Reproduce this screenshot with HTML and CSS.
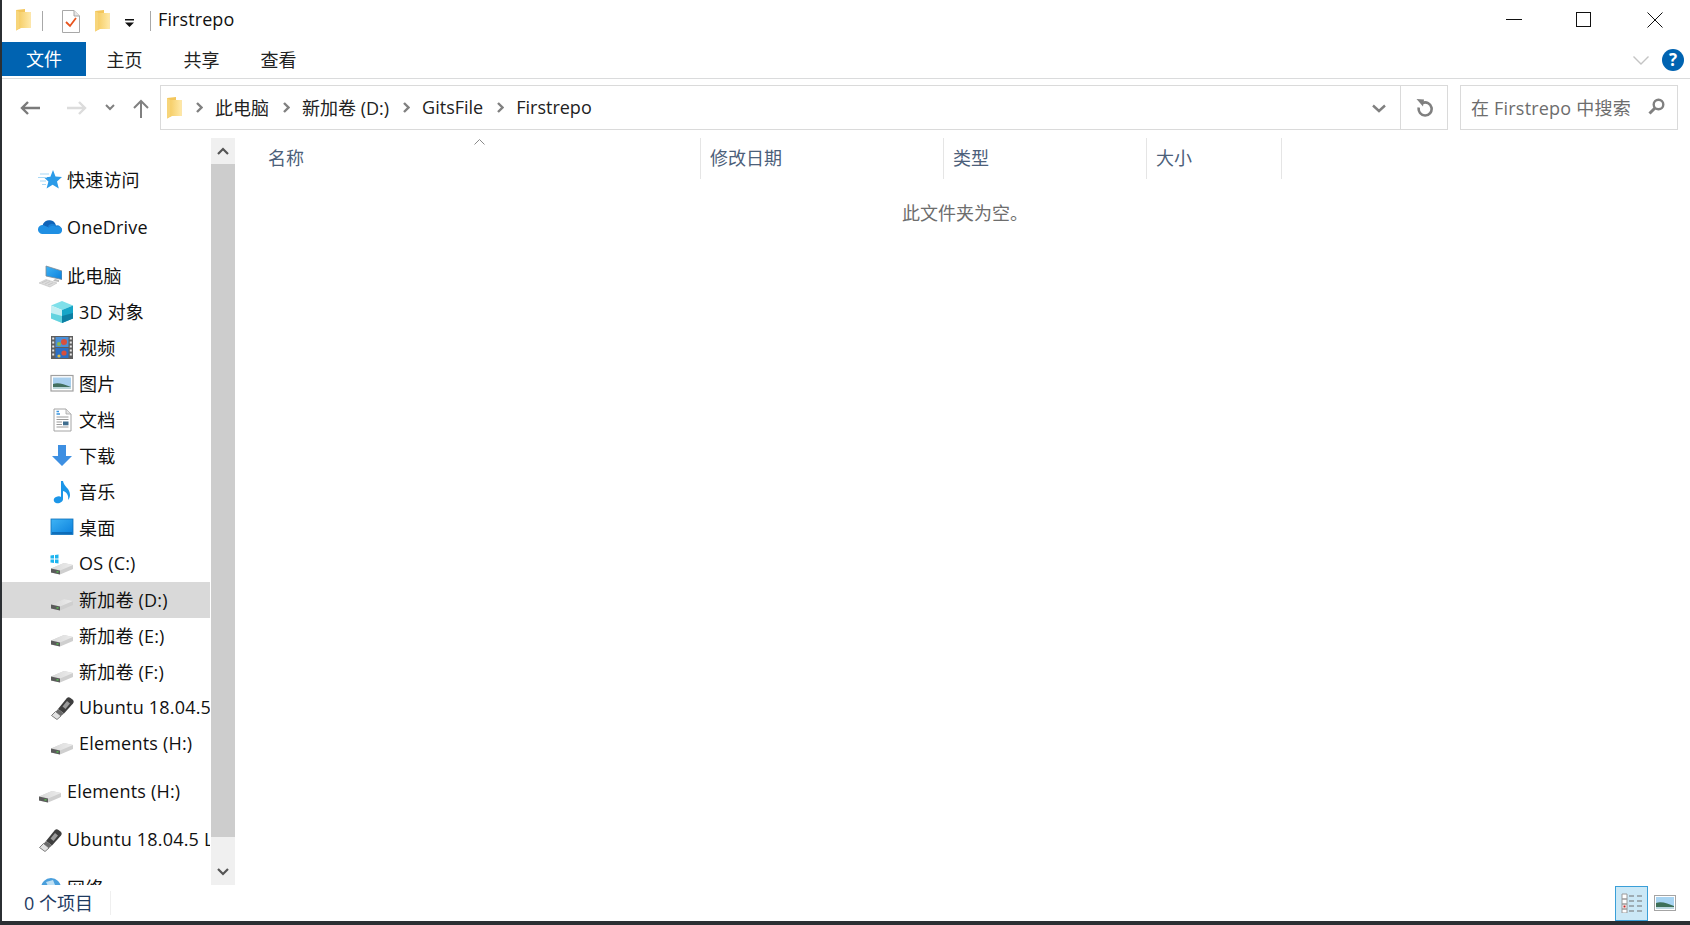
FILE: index.html
```html
<!DOCTYPE html>
<html lang="zh-CN">
<head>
  <meta charset="utf-8">
  <title>Firstrepo</title>
  <link rel="stylesheet" href="styles.css">
</head>
<body>
  <svg class="defs" aria-hidden="true">
    <defs>
      <linearGradient id="fold" x1="0" y1="0" x2="1" y2="0">
        <stop offset="0" stop-color="#f6cf6a"/><stop offset="1" stop-color="#ffe9a8"/>
      </linearGradient>
      <linearGradient id="slab" x1="0" y1="0" x2="1" y2="0">
        <stop offset="0" stop-color="#d8d8d8"/><stop offset="1" stop-color="#ececec"/>
      </linearGradient>
      <linearGradient id="screen" x1="0" y1="0" x2="1" y2="1">
        <stop offset="0" stop-color="#3fb4f5"/><stop offset="1" stop-color="#0a7fdc"/>
      </linearGradient>
      <symbol id="i-folder" viewBox="0 0 15 22">
        <path d="M0 1 L9 0 V3 H14.5 V19 H5 L0 21.5 Z" fill="#f3c65c"/>
        <path d="M3.5 3 H14.5 V19 H3.5 Z" fill="url(#fold)"/>
        <path d="M0 1 L3.5 3 V19 L0 21.5 Z" fill="#f7d57a"/>
      </symbol>
      <symbol id="i-star" viewBox="0 0 24 24">
        <path d="M15 2 L17.5 8.6 L24 9 L19 13.4 L20.8 20.5 L14.6 16.8 L8.6 20.5 L10.4 13.4 L6 9.4 L12.4 8.8 Z" fill="#2b9be8"/>
        <path d="M2 6 H11 M0 9.500 H9 M2 13 H8 M4 16.500 H8" stroke="#a8d8f6" stroke-width="1.2"/>
      </symbol>
      <symbol id="i-cloud" viewBox="0 0 24 24">
        <path d="M5 8 A7 7 0 0 1 18 9.500 L10 16 L4 13 Z" fill="#0f63b8"/>
        <path d="M10 10 A5 5 0 0 1 18 9.500 A5 5 0 0 1 24 15 L14 17 Z" fill="#1a7fd4"/>
        <path d="M5 9 A4.500 4.500 0 0 0 4 18 H20 A4 4 0 0 0 24 15 A4 4 0 0 0 18 11 A5 5 0 0 0 11 11.500 Z" fill="#1f8fe3"/>
      </symbol>
      <symbol id="i-pc" viewBox="0 0 24 24">
        <path d="M8 2 L24 7 V15.500 L8 12 Z" fill="url(#screen)" stroke="#7d8a96" stroke-width=".8"/>
        <path d="M17 15 L21 16 V18 L15 17 Z" fill="#bcbcbc"/>
        <path d="M1 19 L8 15.500 L19 19 L12 23 Z" fill="#dcdcdc" stroke="#b4b4b4" stroke-width=".5"/>
        <path d="M4 18.800 L9 16.500 M7 20 L12 17.500 M10 21 L15 18.800" stroke="#b8b8b8" stroke-width=".6"/>
      </symbol>
      <symbol id="i-cube" viewBox="0 0 24 24">
        <path d="M12 1 L23 5.500 L12 10 L1 5.500 Z" fill="#7fe0ea"/>
        <path d="M1 5.500 L12 10 V23 L1 18.500 Z" fill="#c4eff3"/>
        <path d="M12 10 L23 5.500 V18.500 L12 23 Z" fill="#16a6c8"/>
        <path d="M12 16 L23 13 V18.500 L12 23 Z" fill="#0d7fa3"/>
        <path d="M1 13 L12 16 V23 L1 18.500 Z" fill="#62d3df"/>
      </symbol>
      <symbol id="i-video" viewBox="0 0 24 24">
        <rect x="1" y="0" width="22" height="23" fill="#5e5e5e"/>
        <path d="M2.200 1.500 h2 v2 h-2z M2.200 5.500 h2 v2 h-2z M2.200 9.500 h2 v2 h-2z M2.200 13.500 h2 v2 h-2z M2.200 17.500 h2 v2 h-2z M19.800 1.500 h2 v2 h-2z M19.800 5.500 h2 v2 h-2z M19.800 9.500 h2 v2 h-2z M19.800 13.500 h2 v2 h-2z M19.800 17.500 h2 v2 h-2z" fill="#e8e8e8"/>
        <rect x="5.500" y="1" width="13" height="10" fill="#4a90d8"/>
        <rect x="5.500" y="12" width="13" height="10" fill="#2c6fc4"/>
        <circle cx="14" cy="6" r="3" fill="#d8503c"/><circle cx="9" cy="8" r="2" fill="#8cb84a"/>
        <circle cx="14" cy="17" r="2.600" fill="#d8503c"/><circle cx="9" cy="20" r="1.600" fill="#e0c04a"/>
      </symbol>
      <symbol id="i-pic" viewBox="0 0 24 24">
        <rect x="1" y="3.500" width="22" height="15.500" fill="#fff" stroke="#a0a0a0" stroke-width="1.2"/>
        <rect x="3" y="5.500" width="18" height="11.500" fill="#a8cfee"/>
        <path d="M3 12 C8 10 13 12 21 15 V17 H3 Z" fill="#43705f"/>
        <path d="M3 15 H21 V17 H3 Z" fill="#b9d5d8"/>
      </symbol>
      <symbol id="i-doc" viewBox="0 0 24 24">
        <path d="M4 1 H16 L21 6 V23 H4 Z" fill="#fff" stroke="#a4a4a4" stroke-width="1"/>
        <path d="M16 1 V6 H21" fill="#e4e4e4" stroke="#a4a4a4" stroke-width=".8"/>
        <path d="M6.500 9 H18.500 M6.500 11.500 H18.500 M6.500 14 H12 M6.500 16.500 H12 M6.500 19 H18.500" stroke="#9a9a9a" stroke-width="1"/>
        <rect x="13" y="13.500" width="5.500" height="3.800" fill="#3f6d8e"/>
        <path d="M6.500 6 H10 M6.500 3.500 H9" stroke="#3a94dd" stroke-width="1.400"/>
      </symbol>
      <symbol id="i-down" viewBox="0 0 24 24">
        <path d="M8 1 H16 V12 H22 L12 22 L2 12 H8 Z" fill="#3d8fe2"/>
      </symbol>
      <symbol id="i-music" viewBox="0 0 24 24">
        <path d="M11 1 H13 C14 7 20 8 20 15 C20 17 19 19 18 20 C19 16 17 12 13 11 V19 C13 22 9 24 6 23 C3 22 3 18 6 17 C8 16 10 16 11 17 Z" fill="#1c96e8"/>
      </symbol>
      <symbol id="i-desk" viewBox="0 0 24 24">
        <rect x="1" y="3" width="22" height="15.500" fill="url(#screen)" stroke="#0e6fb8" stroke-width=".8"/>
        <path d="M2 17 H22" stroke="#0a5fa8" stroke-width="1.400"/>
      </symbol>
      <symbol id="i-drive" viewBox="0 0 24 24">
        <path d="M1 16.500 L14 11 L23 13 V17 L10 22.500 L1 20.500 Z" fill="#cfcfcf"/>
        <path d="M1 16.500 L14 11 L23 13 L10 18.500 Z" fill="url(#slab)"/>
        <path d="M1 16.500 L10 18.500 V22.500 L1 20.500 Z" fill="#5a5a5a"/>
        <rect x="6.500" y="19.200" width="2" height="1.400" fill="#57c050"/>
      </symbol>
      <symbol id="i-win" viewBox="0 0 24 24">
        <path d="M1 16.500 L14 11 L23 13 V17 L10 22.500 L1 20.500 Z" fill="#cfcfcf"/>
        <path d="M1 16.500 L14 11 L23 13 L10 18.500 Z" fill="url(#slab)"/>
        <path d="M1 16.500 L10 18.500 V22.500 L1 20.500 Z" fill="#5a5a5a"/>
        <rect x="6.500" y="19.200" width="2" height="1.400" fill="#57c050"/>
        <path d="M0.500 3.500 L4 3 V6.500 H0.500 Z M5 3 L8.500 2.500 V6.500 H5 Z M0.500 7.500 H4 V11 L0.500 10.500 Z M5 7.500 H8.500 V11.500 L5 11 Z" fill="#1cb4ef"/>
      </symbol>
      <symbol id="i-usb" viewBox="0 0 24 24">
        <path d="M8 13 L16.500 2.500 C18 1 19 1 20.500 2 L22.500 3.500 C24 5 24 6 23 7.500 L14 17.500 Z" fill="#3e3e3e"/>
        <path d="M12.500 10.500 L17 5 L20 7.500 L15.500 13 Z" fill="#9a9a9a"/>
        <path d="M8 13 L14 17.500 L11 20 L5.500 16 Z" fill="#6a6a6a"/>
        <path d="M5.500 15.500 L11 20 L7 23.500 L1.500 19.500 Z" fill="#e2e2e2" stroke="#606060" stroke-width=".8"/>
      </symbol>
      <symbol id="i-globe" viewBox="0 0 24 24">
        <circle cx="13" cy="12" r="10" fill="#4a9fdc"/>
        <path d="M8 6 L15 4 L17 9 L11 12 Z M15 14 L20 13 L18 20 L14 19 Z" fill="#bfe0f4"/>
      </symbol>
    </defs>
  </svg>

  <div class="window">
    <header class="titlebar">
      <svg class="qa-folder"><use href="#i-folder"/></svg>
      <span class="qa-sep"></span>
      <svg class="qa-check" viewBox="0 0 18 23">
        <path d="M.5 .5 H12 L17.500 6 V22.500 H.5 Z" fill="#fff" stroke="#a8a8a8"/>
        <path d="M12 .5 V6 H17.500" fill="#e6e6e6" stroke="#a8a8a8"/>
        <path d="M4 12 L8 16 L14 8" fill="none" stroke="#e8541e" stroke-width="1.800"/>
      </svg>
      <svg class="qa-folder2"><use href="#i-folder"/></svg>
      <svg class="qa-arrow" viewBox="0 0 10 9">
        <path d="M0 0 H9 V1.400 H0 Z M0 3.500 H9 L4.500 8 Z" fill="#111"/>
      </svg>
      <span class="qa-sep qa-sep2"></span>
      <span class="title">Firstrepo</span>
      <div class="win-btns">
        <svg class="win-btn win-min" viewBox="0 0 16 16"><path d="M0 7.500 H16" stroke="#111"/></svg>
        <svg class="win-btn win-max" viewBox="0 0 16 16"><rect x=".5" y=".5" width="14" height="14" fill="none" stroke="#111"/></svg>
        <svg class="win-btn win-close" viewBox="0 0 16 16"><path d="M.5 .5 L15.500 15.500 M15.500 .5 L.5 15.500" stroke="#111"/></svg>
      </div>
    </header>

    <nav class="ribbon">
      <a class="tab tab-file">文件</a>
      <a class="tab">主页</a>
      <a class="tab">共享</a>
      <a class="tab">查看</a>
      <svg class="ribbon-chev" viewBox="0 0 16 9"><path d="M.5 .5 L8 8 L15.500 .5" fill="none" stroke="#c4c4c4" stroke-width="1.400"/></svg>
      <span class="help">?</span>
    </nav>

    <div class="toolbar">
      <div class="nav-btns">
        <svg class="nav-back" viewBox="0 0 20 14"><path d="M20 7 H2 M8 1 L2 7 L8 13" fill="none" stroke="#7a7a7a" stroke-width="2.400"/></svg>
        <svg class="nav-fwd" viewBox="0 0 20 14"><path d="M0 7 H18 M12 1 L18 7 L12 13" fill="none" stroke="#dcdcdc" stroke-width="2.400"/></svg>
        <svg class="nav-recent" viewBox="0 0 10 7"><path d="M1 1 L5 5 L9 1" fill="none" stroke="#808080" stroke-width="2"/></svg>
        <svg class="nav-up" viewBox="0 0 16 19"><path d="M8 19 V2 M1 9 L8 2 L15 9" fill="none" stroke="#808080" stroke-width="2"/></svg>
      </div>
      <div class="address">
        <svg class="addr-folder"><use href="#i-folder"/></svg>
        <div class="crumbs">
          <svg class="crumb-sep" viewBox="0 0 7 11"><path d="M1 1 L5.500 5.500 L1 10" fill="none" stroke="#808080" stroke-width="2.400"/></svg>
          <span>此电脑</span>
          <svg class="crumb-sep" viewBox="0 0 7 11"><path d="M1 1 L5.500 5.500 L1 10" fill="none" stroke="#808080" stroke-width="2.400"/></svg>
          <span>新加卷 (D:)</span>
          <svg class="crumb-sep" viewBox="0 0 7 11"><path d="M1 1 L5.500 5.500 L1 10" fill="none" stroke="#808080" stroke-width="2.400"/></svg>
          <span>GitsFile</span>
          <svg class="crumb-sep" viewBox="0 0 7 11"><path d="M1 1 L5.500 5.500 L1 10" fill="none" stroke="#808080" stroke-width="2.400"/></svg>
          <span>Firstrepo</span>
        </div>
        <svg class="addr-drop" viewBox="0 0 14 9"><path d="M1 1.500 L7 7 L13 1.500" fill="none" stroke="#808080" stroke-width="2.400"/></svg>
        <div class="addr-refresh">
          <svg viewBox="0 0 17 18">
            <path d="M6.500 4 A6.500 6.500 0 1 1 2.800 8.500" fill="none" stroke="#808080" stroke-width="2.600"/>
            <path d="M0.500 0 L8 0.500 L7 7.500 Z" fill="#808080"/>
          </svg>
        </div>
      </div>
      <div class="search">
        <span class="search-text">在 Firstrepo 中搜索</span>
        <svg viewBox="0 0 17 17"><circle cx="10.500" cy="6.500" r="4.800" fill="none" stroke="#808080" stroke-width="2.400"/><path d="M7 10 L1.500 15.500" stroke="#808080" stroke-width="3"/></svg>
      </div>
    </div>

    <main class="main">
      <aside class="side">
        <ul class="tree">
          <li class="group lvl1"><svg><use href="#i-star"/></svg><span>快速访问</span></li>
          <li class="group lvl1"><svg><use href="#i-cloud"/></svg><span>OneDrive</span></li>
          <li class="group lvl1"><svg><use href="#i-pc"/></svg><span>此电脑</span></li>
          <li class="lvl2"><svg><use href="#i-cube"/></svg><span>3D 对象</span></li>
          <li class="lvl2"><svg><use href="#i-video"/></svg><span>视频</span></li>
          <li class="lvl2"><svg><use href="#i-pic"/></svg><span>图片</span></li>
          <li class="lvl2"><svg><use href="#i-doc"/></svg><span>文档</span></li>
          <li class="lvl2"><svg><use href="#i-down"/></svg><span>下载</span></li>
          <li class="lvl2"><svg><use href="#i-music"/></svg><span>音乐</span></li>
          <li class="lvl2"><svg><use href="#i-desk"/></svg><span>桌面</span></li>
          <li class="lvl2"><svg><use href="#i-win"/></svg><span>OS (C:)</span></li>
          <li class="lvl2 active"><svg><use href="#i-drive"/></svg><span>新加卷 (D:)</span></li>
          <li class="lvl2"><svg><use href="#i-drive"/></svg><span>新加卷 (E:)</span></li>
          <li class="lvl2"><svg><use href="#i-drive"/></svg><span>新加卷 (F:)</span></li>
          <li class="lvl2"><svg><use href="#i-usb"/></svg><span>Ubuntu 18.04.5 LTS amd64 (G:)</span></li>
          <li class="lvl2"><svg><use href="#i-drive"/></svg><span>Elements (H:)</span></li>
          <li class="group lvl1"><svg><use href="#i-drive"/></svg><span>Elements (H:)</span></li>
          <li class="group lvl1"><svg><use href="#i-usb"/></svg><span>Ubuntu 18.04.5 LTS amd64 (G:)</span></li>
          <li class="group lvl1"><svg><use href="#i-globe"/></svg><span>网络</span></li>
        </ul>
      </aside>
      <div class="scroll">
        <div class="scroll-btn"><svg viewBox="0 0 12 8"><path d="M1 7 L6 2 L11 7" fill="none" stroke="#555" stroke-width="2.200"/></svg></div>
        <div class="scroll-thumb"></div>
        <div class="scroll-btn scroll-btn-end"><svg viewBox="0 0 12 8"><path d="M1 1 L6 6 L11 1" fill="none" stroke="#555" stroke-width="2.200"/></svg></div>
      </div>
      <section class="list">
        <div class="cols">
          <div class="col col-name">名称<svg class="sort" viewBox="0 0 11 6"><path d="M.5 5.500 L5.500 .5 L10.500 5.500" fill="none" stroke="#8a8a8a"/></svg></div>
          <div class="col col-date">修改日期</div>
          <div class="col col-type">类型</div>
          <div class="col col-size">大小</div>
        </div>
        <p class="empty">此文件夹为空。</p>
      </section>
    </main>

    <footer class="status">
      <span class="count">0 个项目</span>
      <div class="views">
        <div class="view view-on">
          <svg viewBox="0 0 22 20">
            <path d="M1 1 h5 v5 h-5z M1 6 h5 v5 h-5z M1 11 h5 v5 h-5z M1 16 h5 v4 h-5z" fill="#fff" stroke="#9a9a9a"/>
            <path d="M8 3 H13 M16 3 H21 M8 8 H13 M16 8 H21 M8 13 H13 M16 13 H21 M8 18 H13 M16 18 H21" stroke="#707070"/>
            <rect x="2.500" y="12.500" width="2" height="2" fill="#c82020"/>
          </svg>
        </div>
        <svg class="view-thumb" viewBox="0 0 22 16">
          <rect x=".5" y=".5" width="21" height="15" fill="#fff" stroke="#a4a4a4"/>
          <rect x="2" y="2" width="18" height="12" fill="#a8d4f2"/>
          <path d="M2 8 C8 6 14 9 20 11 V14 H2 Z" fill="#3e7058"/>
          <path d="M2 12 H20 V14 H2 Z" fill="#bcd8e0"/>
        </svg>
      </div>
    </footer>
  </div>
</body>
</html>
```

FILE: styles.css
```css
html, body {
  margin: 0;
  padding: 0;
  background: #fff;
}
.defs {
  position: absolute;
  width: 0;
  height: 0;
}
.window {
  width: 1690px;
  height: 925px;
  box-sizing: border-box;
  border-left: 2px solid #2b2f33;
  border-bottom: 4px solid #2b2f33;
  display: flex;
  flex-direction: column;
  overflow: hidden;
  color: #111;
  font-family: "Open Sans", "Noto Sans CJK SC", sans-serif;
  font-size: 18px;
}

/* title bar */
.titlebar {
  height: 42px;
  flex: none;
  display: flex;
  align-items: center;
}
.qa-folder {
  width: 15px;
  height: 22px;
  margin: -3px 0 0 14px;
}
.qa-sep {
  width: 1px;
  height: 20px;
  margin-left: 11px;
  background: #a8a8a8;
}
.qa-check {
  width: 18px;
  height: 23px;
  margin: 0 0 0 19px;
}
.qa-folder2 {
  width: 15px;
  height: 22px;
  margin-left: 15px;
}
.qa-arrow {
  width: 10px;
  height: 9px;
  margin: 4px 0 0 15px;
}
.qa-sep2 {
  margin-left: 15px;
}
.title {
  margin: -4px 0 0 7px;
  letter-spacing: .1px;
}
.win-btns {
  margin: -3px 0 0 auto;
  display: flex;
  align-items: center;
}
.win-btn {
  width: 16px;
  height: 16px;
}
.win-min {
  margin-right: 54px;
}
.win-max {
  margin-right: 55px;
}
.win-close {
  margin-right: 27px;
}

/* ribbon tabs */
.ribbon {
  height: 36px;
  flex: none;
  display: flex;
  align-items: flex-start;
  border-bottom: 1px solid #dadbdc;
}
.tab {
  width: 77px;
  height: 34px;
  line-height: 36px;
  text-align: center;
  color: #222;
}
.tab-file {
  width: 84px;
  background: #0063b1;
  color: #fff;
  line-height: 34px;
}
.ribbon-chev {
  width: 16px;
  height: 9px;
  margin: 14px 0 0 auto;
}
.help {
  width: 22px;
  height: 22px;
  margin: 7px 6px 0 13px;
  border-radius: 50%;
  background: #0063b1;
  color: #fff;
  font-size: 17px;
  font-weight: 700;
  line-height: 22px;
  text-align: center;
}

/* nav and address */
.toolbar {
  height: 51px;
  flex: none;
  display: flex;
  align-items: flex-start;
  padding-top: 6px;
  box-sizing: border-box;
}
.nav-btns {
  width: 158px;
  height: 45px;
  flex: none;
  display: flex;
  align-items: center;
}
.nav-back, .nav-fwd {
  width: 20px;
  height: 14px;
}
.nav-back {
  margin-left: 18px;
}
.nav-fwd {
  margin-left: 27px;
}
.nav-recent {
  width: 10px;
  height: 7px;
  margin-left: 18px;
}
.nav-up {
  width: 16px;
  height: 19px;
  margin-left: 18px;
  margin-top: 2px;
}
.address {
  width: 1288px;
  height: 45px;
  flex: none;
  box-sizing: border-box;
  border: 1.5px solid #dadada;
  display: flex;
  align-items: center;
}
.addr-folder {
  width: 15px;
  height: 22px;
  margin-left: 6px;
}
.crumbs {
  display: flex;
  align-items: center;
  flex: 1;
  padding-bottom: 2px;
  font-size: 18px;
  color: #222;
}
.crumb-sep {
  width: 7px;
  height: 11px;
  margin: 2px 12px 0 14px;
}
.addr-drop {
  width: 14px;
  height: 9px;
  margin-right: 14px;
  margin-top: 1px;
}
.addr-refresh {
  width: 46px;
  height: 100%;
  border-left: 1.5px solid #dadada;
  display: flex;
  align-items: center;
  justify-content: center;
}
.addr-refresh svg {
  width: 17px;
  height: 18px;
}
.search {
  width: 218px;
  height: 45px;
  flex: none;
  margin-left: 12px;
  box-sizing: border-box;
  border: 1.5px solid #dadada;
  display: flex;
  align-items: center;
  padding-left: 10px;
}
.search-text {
  color: #6d6d6d;
  white-space: nowrap;
  letter-spacing: .2px;
  margin-bottom: 2px;
}
.search svg {
  width: 17px;
  height: 17px;
  margin: 0 12px 2px auto;
}

/* main area */
.main {
  flex: 1;
  min-height: 0;
  display: flex;
  padding-top: 8px;
  box-sizing: border-box;
}
.side {
  width: 208px;
  flex: none;
  overflow: hidden;
}
.tree {
  list-style: none;
  margin: 0;
  padding: 24px 0 0;
}
.tree li {
  height: 36px;
  display: flex;
  align-items: center;
  white-space: nowrap;
  box-sizing: border-box;
}
.tree li svg {
  width: 24px;
  height: 24px;
  flex: none;
  margin-bottom: 1px;
}
.tree li span {
  margin: 0 0 3px 5px;
  letter-spacing: .2px;
}
.group + .group,
.lvl2 + .group {
  margin-top: 12px;
}
.lvl1 {
  padding-left: 36px;
}
.lvl2 {
  padding-left: 48px;
}
.tree li.active {
  background: #d9d9d9;
}
.scroll {
  width: 24px;
  flex: none;
  display: flex;
  flex-direction: column;
  background: #f0f0f0;
  margin-left: 1px;
}
.scroll-btn {
  height: 26px;
  flex: none;
  display: flex;
  align-items: center;
  justify-content: center;
}
.scroll-btn svg {
  width: 12px;
  height: 8px;
}
.scroll-thumb {
  height: 673px;
  flex: none;
  background: #cdcdcd;
}
.scroll-btn-end {
  height: 48px;
  align-items: flex-end;
  padding-bottom: 9px;
  box-sizing: border-box;
}
.list {
  flex: 1;
  min-width: 0;
}
.cols {
  height: 41px;
  display: flex;
  color: #4c607a;
}
.col {
  height: 100%;
  line-height: 41px;
  padding-left: 9px;
  box-sizing: border-box;
  border-right: 1px solid #e5e5e5;
}
.col-name {
  width: 466px;
  padding-left: 33px;
  position: relative;
}
.col-date {
  width: 243px;
}
.col-type {
  width: 203px;
}
.col-size {
  width: 135px;
}
.sort {
  position: absolute;
  left: 239px;
  top: 1px;
  width: 11px;
  height: 6px;
}
.empty {
  margin: 19px 0 0;
  padding-left: 5px;
  line-height: 30px;
  text-align: center;
  color: #6d6d6d;
}

/* status bar */
.status {
  height: 36px;
  flex: none;
  display: flex;
  align-items: center;
  background: #fff;
  color: #1e3a5f;
}
.count {
  width: 109px;
  padding-left: 22px;
  box-sizing: border-box;
  border-right: 1px solid #efefef;
  line-height: 24px;
}
.views {
  margin-left: auto;
  display: flex;
  align-items: center;
}
.view-on {
  width: 33px;
  height: 35px;
  box-sizing: border-box;
  border: 1.5px solid #3a9fd8;
  background: #cbe8f6;
  display: flex;
  align-items: center;
  justify-content: center;
}
.view-on svg {
  width: 22px;
  height: 20px;
}
.view-thumb {
  width: 22px;
  height: 16px;
  margin: 0 14px 0 6px;
}
```
